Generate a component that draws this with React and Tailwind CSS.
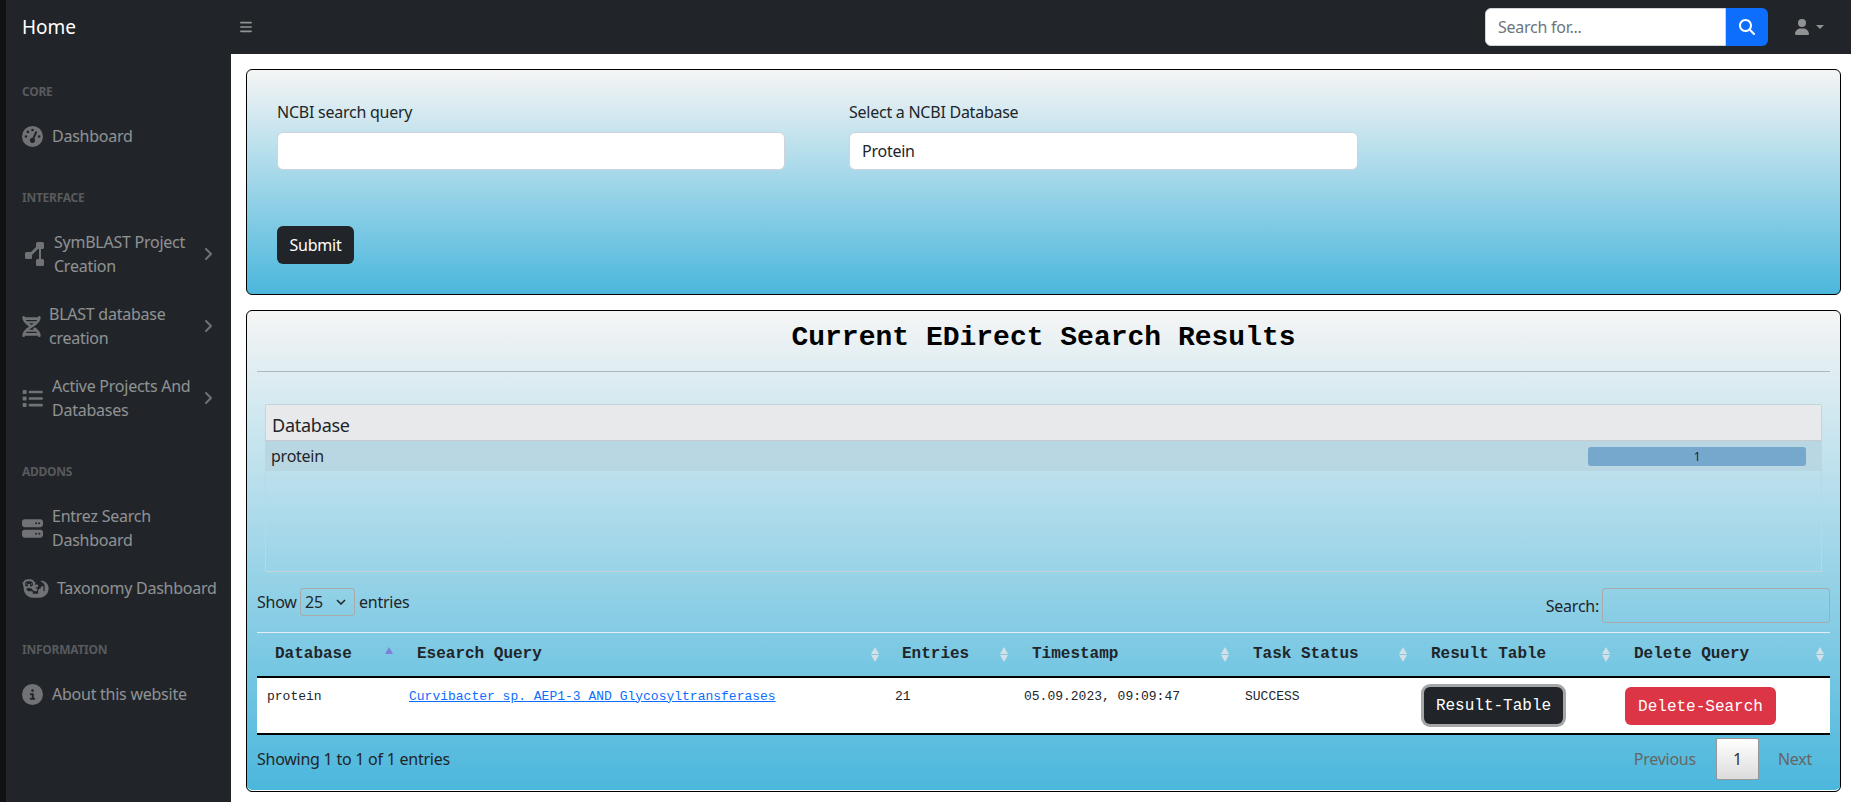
import React from "react";
import { FaGaugeHigh, FaDna, FaList, FaServer, FaOtter, FaCircleInfo, FaUser, FaMagnifyingGlass, FaBars, FaAngleRight } from "react-icons/fa6";

const ui = "font-['Noto_Sans',sans-serif]";
const mono = "font-['Liberation_Mono',monospace]";

function Heading({ children }) {
  return <div className="pt-[29px] pb-[11px] px-4 text-xs leading-[18px] font-bold text-[#ffffff40]">{children}</div>;
}

function NavItem({ icon, label, gap, chevron }) {
  return (
    <div className="flex items-center py-3 pl-4 pr-[18px] text-[#ffffff80] leading-6 whitespace-nowrap">
      <span className="shrink-0 flex items-center text-[#707275]" style={{ marginRight: gap }}>{icon}</span>
      <span className="flex-1">{label}</span>
      {chevron && <FaAngleRight className="w-[10px] h-[16px] shrink-0 text-[#707275]" />}
    </div>
  );
}

function NodesIcon() {
  return (
    <svg width="19" height="24" viewBox="0 0 19 24" className="ml-[3px]" fill="currentColor">
      <rect x="0" y="10" width="7" height="7" rx="1.5" />
      <rect x="11" y="0" width="8" height="7" rx="1.5" />
      <rect x="11" y="17" width="8" height="7" rx="1.5" />
      <path d="M4 12L13 3l2 2-9 9z" />
      <rect x="14" y="5" width="2" height="13" />
    </svg>
  );
}

function Sidebar() {
  return (
    <aside className="w-[225px] shrink-0 bg-[#212529]">
      <Heading>CORE</Heading>
      <NavItem icon={<FaGaugeHigh className="w-[21px] h-[21px]" />} label="Dashboard" gap={9} />
      <Heading>INTERFACE</Heading>
      <NavItem icon={<NodesIcon />} label={<>SymBLAST Project<br />Creation</>} gap={10} chevron />
      <NavItem icon={<FaDna className="w-[19px] h-[21px]" />} label={<>BLAST database<br />creation</>} gap={8} chevron />
      <NavItem icon={<FaList className="w-[21px] h-[21px]" />} label={<>Active Projects And<br />Databases</>} gap={9} chevron />
      <Heading>ADDONS</Heading>
      <NavItem icon={<FaServer className="w-[21px] h-[21px]" />} label={<>Entrez Search<br />Dashboard</>} gap={9} />
      <NavItem icon={<FaOtter className="w-[27px] h-[21px]" />} label="Taxonomy Dashboard" gap={8} />
      <Heading>INFORMATION</Heading>
      <NavItem icon={<FaCircleInfo className="w-[21px] h-[21px]" />} label="About this website" gap={9} />
    </aside>
  );
}

function TopNav() {
  return (
    <header className="h-[54px] shrink-0 bg-[#212529] flex items-center">
      <div className="w-[225px] pl-4 text-[19px] text-white leading-none tracking-normal">Home</div>
      <FaBars className="ml-[9px] w-[12px] h-[14px] text-[#ffffff80]" />
      <div className="ml-auto flex h-[38px] w-[283px]">
        <div className="flex-1 bg-white border border-[#ced4da] rounded-l-md px-3 text-[#6c757d] flex items-center">Search for...</div>
        <div className="w-[42px] bg-[#0d6efd] rounded-r-md flex items-center justify-center">
          <FaMagnifyingGlass className="w-[16px] h-[16px] text-white" />
        </div>
      </div>
      <div className="ml-[27px] mr-[27px] flex items-center gap-[7px] text-[#ffffff80]">
        <FaUser className="w-[14px] h-[16px]" />
        <span className="w-0 h-0 border-x-[4px] border-x-transparent border-t-[4px] border-t-[#ffffff80]" />
      </div>
    </header>
  );
}

function SearchCard() {
  return (
    <section className="border border-black rounded-md p-[30px] bg-[linear-gradient(#f5f5f5,#4bb7dc)] text-[#212529]">
      <div className="flex gap-16">
        <div className="w-[508px]">
          <div className="leading-6 mb-2">NCBI search query</div>
          <div className="h-[38px] bg-white rounded-md border border-[#ced4da]" />
        </div>
        <div className="w-[509px]">
          <div className="leading-6 mb-2">Select a NCBI Database</div>
          <div className="h-[38px] bg-white rounded-md border border-[#ced4da] px-3 flex items-center">Protein</div>
        </div>
      </div>
      <button className="block mt-14 h-[38px] w-[77px] bg-[#212529] text-white rounded-md">Submit</button>
    </section>
  );
}

function Sort({ active }) {
  return (
    <span className="absolute right-[6px] top-[14px] flex flex-col gap-[1px]">
      <svg width="8" height="7" viewBox="0 0 8 7"><path d="M4 0L8 7H0z" fill={active ? "#7f80d9" : "#d3e0e6"} /></svg>
      <svg width="8" height="7" viewBox="0 0 8 7"><path d="M0 0H8L4 7z" fill={active ? "transparent" : "#d3e0e6"} /></svg>
    </span>
  );
}

const cols = [
  ["Database", 142, 18],
  ["Esearch Query", 486, 18],
  ["Entries", 129, 17],
  ["Timestamp", 221, 18],
  ["Task Status", 178, 18],
  ["Result Table", 203, 18],
  ["Delete Query", 214, 18],
];

function ResultsTable() {
  return (
    <table className={`w-[1573px] table-fixed border-collapse ${mono} text-[#212529] tracking-normal`}>
      <colgroup>
        {cols.map(([n, w]) => <col key={n} style={{ width: w }} />)}
      </colgroup>
      <thead>
        <tr className="border-t border-t-[#e3eef3] border-b-2 border-b-black">
          {cols.map(([n, , p], i) => (
            <th key={n} className="relative h-[44px] text-left text-base font-bold align-middle" style={{ paddingLeft: p }}>
              {n}
              <Sort active={i === 0} />
            </th>
          ))}
        </tr>
      </thead>
      <tbody className="bg-white text-[13px] leading-[17px] align-top">
        <tr className="h-[57px] border-b-2 border-b-black">
          <td className="pl-[10px] pt-[10px]">protein</td>
          <td className="pl-[10px] pt-[10px]"><a className="text-[#0d6efd] underline">Curvibacter sp. AEP1-3 AND Glycosyltransferases</a></td>
          <td className="pl-[10px] pt-[10px]">21</td>
          <td className="pl-[10px] pt-[10px]">05.09.2023, 09:09:47</td>
          <td className="pl-[10px] pt-[10px]">SUCCESS</td>
          <td className="pl-[11px] pt-[9px]">
            <button className="h-[37px] w-[139px] pt-[2px] bg-[#212529] text-white text-base rounded-md shadow-[0_0_0_3px_#a4a6a8]">Result-Table</button>
          </td>
          <td className="pl-[9px] pt-[9px]">
            <button className="h-[38px] w-[151px] pt-[2px] bg-[#dc3545] text-white text-base rounded-md">Delete-Search</button>
          </td>
        </tr>
      </tbody>
    </table>
  );
}

function ResultsCard() {
  return (
    <section className="border border-black rounded-md px-[10px] h-[482px] bg-[linear-gradient(#f5f5f5,#4bb7dc)] shadow-[inset_0_-1px_0_#fff] text-[#212529]">
      <h2 className={`${mono} text-[28px] leading-8 font-bold text-black text-center tracking-normal pt-[11px] mb-[17px]`}>Current EDirect Search Results</h2>
      <div className="h-px bg-[#aeb8bf]" />
      <div className="mt-8 mx-2 w-[1557px] h-[168px] border border-[#c5d3da] rounded-[2px]">
        <div className="h-[36px] bg-[#e8e9eb] border-b border-[#c8cbce] px-[6px] text-lg leading-[40px]">Database</div>
        <div className="h-[30px] bg-[#b9d7e2] flex items-center justify-between pl-[5px] pr-[15px]">
          <span>protein</span>
          <div className="w-[218px] h-[19px] bg-[#76a7cd] rounded-[3px] text-xs text-center leading-[19px]">1</div>
        </div>
      </div>
      <div className="mt-4 h-[44px] flex justify-between items-start">
        <div className="flex items-center h-7 text-[#212529]">
          <span className="w-[43px]">Show</span>
          <div className="w-[55px] h-7 border border-[#aaa] rounded-[3px] flex items-center justify-between pl-1 pr-2">
            <span>25</span>
            <svg width="10" height="6" viewBox="0 0 10 6"><path d="M1 1l4 4 4-4" fill="none" stroke="#222" strokeWidth="1.5" /></svg>
          </div>
          <span className="ml-1">entries</span>
        </div>
        <div className="flex items-center gap-[3px] h-[35px]">
          <span>Search:</span>
          <div className="w-[228px] h-[35px] border border-[#aaa] rounded-[3px]" />
        </div>
      </div>
      <ResultsTable />
      <div className="mt-[3px] flex justify-between items-center h-[42px]">
        <span>Showing 1 to 1 of 1 entries</span>
        <div className="flex items-center text-[#666]">
          <span className="mr-[20px]">Previous</span>
          <span className="w-[43px] h-[42px] flex items-center justify-center border border-[#979797] rounded-[2px] bg-gradient-to-b from-white to-[#dcdcdc] text-[#333]">1</span>
          <span className="ml-[19px] mr-[18px]">Next</span>
        </div>
      </div>
    </section>
  );
}

export default function App() {
  return (
    <div className={`h-[802px] w-[1851px] overflow-hidden flex bg-white text-base tracking-[-0.25px] ${ui}`}>
      <div className="w-[6px] bg-[#101214]" />
      <div className="flex-1 flex flex-col">
        <TopNav />
        <div className="flex flex-1">
          <Sidebar />
          <main className="flex-1 pt-[15px] pl-[15px] pr-[10px] flex flex-col gap-[15px]">
            <SearchCard />
            <ResultsCard />
          </main>
        </div>
      </div>
    </div>
  );
}
